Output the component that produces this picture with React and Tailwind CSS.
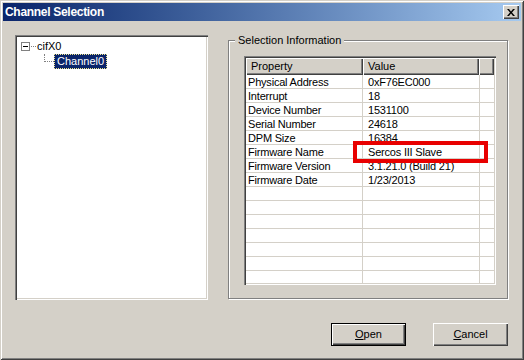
import React from "react";

const font = "font-['Liberation_Sans',Arial,sans-serif]";

const rows = [
  ["Physical Address", "0xF76EC000"],
  ["Interrupt", "18"],
  ["Device Number", "1531100"],
  ["Serial Number", "24618"],
  ["DPM Size", "16384"],
  ["Firmware Name", "Sercos III Slave"],
  ["Firmware Version", "3.1.21.0 (Build 21)"],
  ["Firmware Date", "1/23/2013"],
];

const allRows = [...rows, ...Array.from({ length: 7 }, () => ["", ""])];

function WinButton({ children, isDefault }) {
  return (
    <div
      className={
        "w-[75px] h-[23px] bg-[#d4d0c8] flex items-center justify-center text-[11px] text-black " +
        (isDefault
          ? "border border-black shadow-[inset_1px_1px_#fff,inset_-1px_-1px_#404040,inset_-2px_-2px_#808080]"
          : "shadow-[inset_1px_1px_#fff,inset_-1px_-1px_#404040,inset_-2px_-2px_#808080]")
      }
    >
      {children}
    </div>
  );
}

export default function App() {
  return (
    <div
      className={`${font} relative w-[524px] h-[360px] bg-[#d4d0c8] p-[3px] flex flex-col shadow-[inset_1px_1px_#d4d0c8,inset_-1px_-1px_#404040,inset_2px_2px_#fff,inset_-2px_-2px_#808080] overflow-hidden`}
    >
      {/* Title bar */}
      <div className="h-[18px] shrink-0 flex items-center bg-gradient-to-r from-[#0a246a] to-[#a6caf0] pl-[2px] pr-[2px]">
        <span className="text-white font-bold text-[12px] leading-none tracking-[-0.3px]">Channel Selection</span>
        <div className="ml-auto w-[16px] h-[14px] bg-[#d4d0c8] flex items-center justify-center shadow-[inset_1px_1px_#fff,inset_-1px_-1px_#404040,inset_-2px_-2px_#808080]">
          <svg width="8" height="7" viewBox="0 0 8 7">
            <path d="M0 0h2l2 2.5L6 0h2L5 3.5 8 7H6L4 4.5 2 7H0l3-3.5z" fill="#000" />
          </svg>
        </div>
      </div>

      {/* Body */}
      <div className="flex flex-col pl-[12px] pt-[14px]">
        <div className="flex items-start">
          {/* Tree */}
          <div className="w-[193px] h-[265px] bg-white shadow-[inset_1px_1px_#808080,inset_2px_2px_#404040,inset_-1px_-1px_#fff,inset_-2px_-2px_#d4d0c8] pt-[4px] pl-[6px] text-[11px] text-black">
            <div className="flex items-center h-[15px]">
              <div className="w-[9px] h-[9px] border border-[#808080] bg-white flex items-center justify-center">
                <div className="w-[5px] h-[1px] bg-black" />
              </div>
              <div className="w-[5px] border-t border-dotted border-[#808080] mx-[1px]" />
              <span className="leading-none">cifX0</span>
            </div>
            <div className="flex items-start h-[16px]">
              <div className="ml-[23px] w-[10px] h-[8px] border-l border-b border-dotted border-[#808080]" />
              <div className="ml-[0px] h-[15px] px-[2px] bg-[#0a246a] text-white flex items-center border border-dotted border-[#f0e68c] leading-none">
                Channel0
              </div>
            </div>
          </div>

          {/* Group box */}
          <div className="relative ml-[20px] mt-[5px] w-[280px] h-[259px] border border-[#808080] shadow-[1px_1px_#fff,inset_1px_1px_#fff] pt-[15px] pl-[15px]">
            <div className="absolute left-[6px] -top-[7px] bg-[#d4d0c8] px-[3px] text-[11px] leading-[13px] text-black">
              Selection Information
            </div>
            {/* List view */}
            <div className="w-[252px] h-[229px] bg-white p-[2px] shadow-[inset_1px_1px_#808080,inset_2px_2px_#404040,inset_-1px_-1px_#fff,inset_-2px_-2px_#d4d0c8] overflow-hidden">
              <div className="w-full h-full overflow-hidden">
                <div className="flex h-[17px] text-[11px] text-black">
                  <div className="w-[117px] shrink-0 bg-[#d4d0c8] flex items-center pl-[5px] shadow-[inset_1px_1px_#fff,inset_-1px_-1px_#404040,inset_-2px_-2px_#808080]">
                    Property
                  </div>
                  <div className="w-[116px] shrink-0 bg-[#d4d0c8] flex items-center pl-[5px] shadow-[inset_1px_1px_#fff,inset_-1px_-1px_#404040,inset_-2px_-2px_#808080]">
                    Value
                  </div>
                  <div className="flex-1 bg-[#d4d0c8] shadow-[inset_1px_1px_#fff,inset_-1px_-1px_#404040,inset_-2px_-2px_#808080]" />
                </div>
                {allRows.map(([k, v], i) => (
                  <div key={i} className="flex h-[14px] border-b border-[#d4d0c8] text-[11px] text-black leading-[15px] tracking-[-0.2px]">
                    <div className="w-[116px] shrink-0 pl-[2px] whitespace-nowrap">{k}</div>
                    <div className="w-[117px] shrink-0 pl-[5px] border-l border-[#d4d0c8] whitespace-nowrap">{v}</div>
                    <div className="flex-1 border-l border-[#d4d0c8]" />
                  </div>
                ))}
              </div>
            </div>
          </div>
        </div>

        {/* Buttons */}
        <div className="flex justify-end gap-[27px] mt-[23px] pr-[13px]">
          <WinButton isDefault>
            <span><span className="underline">O</span>pen</span>
          </WinButton>
          <WinButton>
            <span><span className="underline">C</span>ancel</span>
          </WinButton>
        </div>
      </div>

      {/* Red highlight overlay */}
      <div className="absolute left-[353px] top-[141px] w-[135px] h-[22px] border-[4px] border-[#e80000]" />
    </div>
  );
}
